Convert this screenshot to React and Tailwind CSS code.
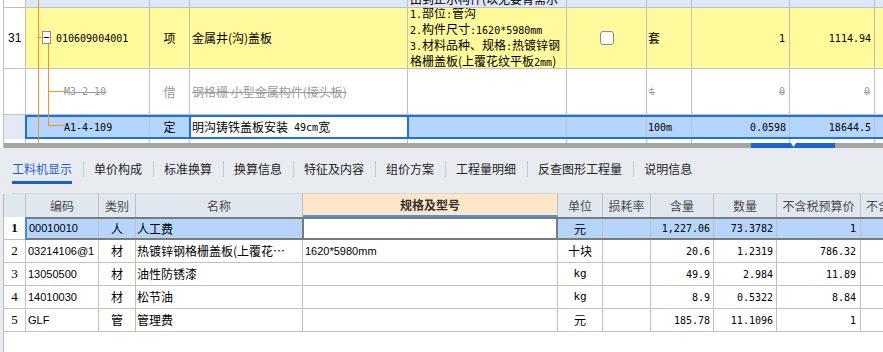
import React from 'react';

const mono = "font-['DejaVu_Sans_Mono',monospace] text-[10px]";
const line = 'border-r border-[#c0c0c0]';

function M({ children, className = '' }) {
  return <span className={`${mono} ${className}`}>{children}</span>;
}

function TreeLines() {
  return (
    <svg className="absolute left-0 top-0 pointer-events-none" width="100" height="143">
      <g stroke="#f6921e" strokeWidth="1" shapeRendering="crispEdges">
        <line x1="34.5" y1="0" x2="34.5" y2="143" />
        <line x1="34" y1="37.5" x2="38" y2="37.5" />
        <line x1="44.5" y1="44" x2="44.5" y2="126" />
        <line x1="44" y1="91.5" x2="62" y2="91.5" />
        <line x1="44" y1="125.5" x2="61" y2="125.5" />
      </g>
      <rect x="38.5" y="31.5" width="8" height="12" fill="#fff" stroke="#8c8c8c" shapeRendering="crispEdges" />
      <line x1="40" y1="37.5" x2="45" y2="37.5" stroke="#000" shapeRendering="crispEdges" />
    </svg>
  );
}

function TopPart() {
  return (
    <div className="flex h-[148px]">
      <div className="w-[4px] shrink-0 border-r border-[#c0c0c0] bg-white" />
      <div className="relative flex-1 flex flex-col">
        {/* previous row, cut off */}
        <div className="flex h-[8px] shrink-0 border-b border-[#c0c0c0] bg-[#dde8fb]">
          <div className={`w-[22px] shrink-0 bg-white ${line}`} />
          <div className={`w-[124px] shrink-0 ${line}`} />
          <div className={`w-[40px] shrink-0 ${line}`} />
          <div className={`w-[218px] shrink-0 ${line}`} />
          <div className={`w-[159px] shrink-0 flex items-end overflow-hidden pl-[2px] ${line}`}>
            <div className="leading-[14px] whitespace-nowrap mb-[1px]">由到正示构件(以无要青需示</div>
          </div>
          <div className={`w-[80px] shrink-0 ${line}`} />
          <div className={`w-[45px] shrink-0 ${line}`} />
          <div className={`w-[98px] shrink-0 ${line}`} />
          <div className={`w-[85px] shrink-0 ${line}`} />
          <div className="flex-1" />
        </div>

        {/* row 31 */}
        <div className="flex h-[61px] shrink-0 border-b border-[#c0c0c0] bg-[#fffa9c]">
          <div className={`w-[22px] shrink-0 bg-white flex items-center pl-[4px] font-['Liberation_Sans',sans-serif] text-[12px] ${line}`}>31</div>
          <div className={`w-[124px] shrink-0 flex items-center pl-[30px] ${line}`}>
            <M>010609004001</M>
          </div>
          <div className={`w-[40px] shrink-0 flex items-center justify-center ${line}`}>项</div>
          <div className={`w-[218px] shrink-0 flex items-center pl-[2px] ${line}`}>金属井(沟)盖板</div>
          <div className={`w-[159px] shrink-0 flex flex-col justify-center pl-[2px] leading-[14px] whitespace-nowrap overflow-hidden ${line}`}>
            <div><M>1.</M>部位<M>:</M>管沟</div>
            <div><M>2.</M>构件尺寸<M>:1620*5980mm</M></div>
            <div><M>3.</M>材料品种、规格<M>:</M>热镀锌钢</div>
            <div>格栅盖板(上覆花纹平板<M>2mm</M>)</div>
          </div>
          <div className={`w-[80px] shrink-0 flex items-center justify-center ${line}`}>
            <div className="w-[14px] h-[14px] rounded-[3px] border border-[#8c8c8c] bg-white" />
          </div>
          <div className={`w-[45px] shrink-0 flex items-center pl-[1px] ${line}`}>套</div>
          <div className={`w-[98px] shrink-0 flex items-center justify-end pr-[4px] ${line}`}><M>1</M></div>
          <div className={`w-[85px] shrink-0 flex items-center justify-end pr-[3px] ${line}`}><M>1114.94</M></div>
          <div className="flex-1" />
        </div>

        {/* borrowed row, struck out */}
        <div className="flex h-[46px] shrink-0 border-b border-[#c0c0c0] bg-white text-[#9a9a9a]">
          <div className={`w-[22px] shrink-0 ${line}`} />
          <div className={`w-[124px] shrink-0 flex items-center pl-[38px] ${line}`}>
            <M className="line-through">M3-2-10</M>
          </div>
          <div className={`w-[40px] shrink-0 flex items-center justify-center ${line}`}>借</div>
          <div className={`w-[218px] shrink-0 flex items-center pl-[2px] whitespace-nowrap overflow-hidden line-through ${line}`}>钢格栅 小型金属构件(接头板)</div>
          <div className={`w-[159px] shrink-0 ${line}`} />
          <div className={`w-[80px] shrink-0 ${line}`} />
          <div className={`w-[45px] shrink-0 flex items-center pl-[2px] ${line}`}><M className="line-through">t</M></div>
          <div className={`w-[98px] shrink-0 flex items-center justify-end pr-[4px] ${line}`}><M className="line-through">0</M></div>
          <div className={`w-[85px] shrink-0 flex items-center justify-end pr-[4px] ${line}`}><M className="line-through">0</M></div>
          <div className="flex-1" />
        </div>

        {/* selected row */}
        <div className="flex h-[24px] shrink-0">
          <div className="w-[21px] shrink-0 bg-[#e4e9f5]" />
          <div className="flex-1 flex border-y-2 border-l-2 border-[#1a6ef0] bg-[#b4d5fd]">
            <div className={`w-[123px] shrink-0 flex items-center pl-[37px] ${line}`}><M>A1-4-109</M></div>
            <div className="w-[39px] shrink-0 flex items-center justify-center">定</div>
            <div className="w-[220px] shrink-0 flex items-center pl-[1px] bg-white border-x-2 border-[#1a6ef0] whitespace-nowrap">
              明沟铸铁盖板安装<M>&nbsp;49cm</M>宽
            </div>
            <div className={`w-[158px] shrink-0 ${line}`} />
            <div className={`w-[80px] shrink-0 ${line}`} />
            <div className={`w-[45px] shrink-0 flex items-center pl-[1px] ${line}`}><M>100m</M></div>
            <div className={`w-[98px] shrink-0 flex items-center justify-end pr-[3px] ${line}`}><M>0.0598</M></div>
            <div className={`w-[85px] shrink-0 flex items-center justify-end pr-[3px] ${line}`}><M>18644.5</M></div>
            <div className="flex-1" />
          </div>
        </div>

        {/* filler */}
        <div className="flex h-[4px] shrink-0 bg-white">
          <div className={`w-[22px] shrink-0 ${line}`} />
          <div className={`w-[124px] shrink-0 ${line}`} />
          <div className={`w-[40px] shrink-0 ${line}`} />
          <div className={`w-[218px] shrink-0 ${line}`} />
          <div className={`w-[159px] shrink-0 ${line}`} />
          <div className={`w-[80px] shrink-0 ${line}`} />
          <div className={`w-[45px] shrink-0 ${line}`} />
          <div className={`w-[98px] shrink-0 ${line}`} />
          <div className={`w-[85px] shrink-0 ${line}`} />
        </div>

        {/* horizontal scrollbar */}
        <div className="flex h-[5px] shrink-0 bg-[#a5a5a8]">
          <div className="w-[747px] shrink-0" />
          <div className="w-[84px] shrink-0 bg-[#1c64d2] flex justify-center">
            <svg width="5" height="4" viewBox="0 0 5 4"><path d="M0 0h5L2.5 4z" fill="#fff" /></svg>
          </div>
        </div>

        <TreeLines />
      </div>
    </div>
  );
}

const tabs = ['工料机显示', '单价构成', '标准换算', '换算信息', '特征及内容', '组价方案', '工程量明细', '反查图形工程量', '说明信息'];

function Tabs() {
  return (
    <div className="h-[46px] shrink-0 ml-[12px] border-b border-[#d2d7dd] flex items-start pt-[13px] text-[#222]">
      {tabs.map((t, i) => (
        <React.Fragment key={t}>
          {i > 0 && <div className="w-px h-[16px] bg-[#c6cbd2] ml-[11px] mr-[10px]" />}
          <div
            className={
              i === 0
                ? 'leading-[16px] text-[#1d5fd0] border-b-[3px] border-[#1d5fd0] pb-[4px] whitespace-nowrap'
                : 'leading-[16px] whitespace-nowrap'
            }
          >
            {t}
          </div>
        </React.Fragment>
      ))}
    </div>
  );
}

const rows = [
  { n: '2', code: '03214106@1', type: '材', name: '热镀锌钢格栅盖板(上覆花…', spec: '1620*5980mm', unit: '十块', content: '20.6', amount: '1.2319', price: '786.32' },
  { n: '3', code: '13050500', type: '材', name: '油性防锈漆', spec: '', unit: 'kg', content: '49.9', amount: '2.984', price: '11.89' },
  { n: '4', code: '14010030', type: '材', name: '松节油', spec: '', unit: 'kg', content: '8.9', amount: '0.5322', price: '8.84' },
  { n: '5', code: 'GLF', type: '管', name: '管理费', spec: '', unit: '元', content: '185.78', amount: '11.1096', price: '1' },
];

function Unit({ u }) {
  if (/^[a-z]+$/.test(u)) return <M className="text-[11px]">{u}</M>;
  return <span>{u}</span>;
}

function BottomTable() {
  return (
    <div className="flex-1 ml-[3px] border-l border-[#b9b9b9] bg-white flex flex-col">
      {/* header */}
      <div className="flex h-[23px] shrink-0 bg-[#e1e7ef] text-[#4a4a4a]">
        <div className={`w-[22px] shrink-0 ${line}`} />
        <div className={`w-[73px] shrink-0 flex items-center justify-center ${line}`}>编码</div>
        <div className={`w-[37px] shrink-0 flex items-center justify-center ${line}`}>类别</div>
        <div className={`w-[167px] shrink-0 flex items-center justify-center ${line}`}>名称</div>
        <div className={`w-[255px] shrink-0 flex items-center justify-center bg-[#ffe6c9] border-b-2 border-b-[#4a95e6] font-bold text-[#333] ${line}`}>规格及型号</div>
        <div className={`w-[45px] shrink-0 flex items-center justify-center ${line}`}>单位</div>
        <div className={`w-[48px] shrink-0 flex items-center justify-center ${line}`}>损耗率</div>
        <div className={`w-[63px] shrink-0 flex items-center justify-center ${line}`}>含量</div>
        <div className={`w-[63px] shrink-0 flex items-center justify-center ${line}`}>数量</div>
        <div className={`w-[84px] shrink-0 flex items-center justify-center ${line}`}>不含税预算价</div>
        <div className="flex-1 flex items-center pl-[5px] overflow-hidden whitespace-nowrap">不含税市场价</div>
      </div>

      {/* selected row 1 */}
      <div className="flex h-[23px] shrink-0">
        <div className="w-[21px] shrink-0 flex items-center justify-center border-b border-[#c0c0c0] font-['Liberation_Serif',serif] text-[13px] font-bold">1</div>
        <div className="flex-1 flex border-y-2 border-[#7b7b7b] bg-[#b5d5fb]">
          <div className={`w-[74px] shrink-0 flex items-center pl-[2px] border-l-2 border-l-[#3a8cf0] font-['Liberation_Sans',sans-serif] text-[11px] ${line}`}>00010010</div>
          <div className={`w-[37px] shrink-0 flex items-center justify-center ${line}`}>人</div>
          <div className="w-[166px] shrink-0 flex items-center pl-[1px]">人工费</div>
          <div className="w-[256px] shrink-0 bg-white border-x-2 border-[#7b7b7b]" />
          <div className={`w-[45px] shrink-0 flex items-center justify-center ${line}`}>元</div>
          <div className={`w-[48px] shrink-0 ${line}`} />
          <div className={`w-[63px] shrink-0 flex items-center justify-end pr-[3px] ${line}`}><M>1,227.06</M></div>
          <div className={`w-[63px] shrink-0 flex items-center justify-end pr-[3px] ${line}`}><M>73.3782</M></div>
          <div className={`w-[84px] shrink-0 flex items-center justify-end pr-[4px] ${line}`}><M>1</M></div>
          <div className="flex-1" />
        </div>
      </div>

      {rows.map((r) => (
        <div key={r.n} className="flex h-[23px] shrink-0 border-b border-[#c0c0c0]">
          <div className={`w-[22px] shrink-0 flex items-center justify-center font-['Liberation_Serif',serif] text-[13px] ${line}`}>{r.n}</div>
          <div className={`w-[73px] shrink-0 flex items-center pl-[2px] whitespace-nowrap overflow-hidden font-['Liberation_Sans',sans-serif] text-[11px] ${line}`}>{r.code}</div>
          <div className={`w-[37px] shrink-0 flex items-center justify-center ${line}`}>{r.type}</div>
          <div className={`w-[167px] shrink-0 flex items-center pl-[1px] whitespace-nowrap overflow-hidden ${line}`}>{r.name}</div>
          <div className={`w-[255px] shrink-0 flex items-center pl-[2px] font-['Liberation_Sans',sans-serif] text-[11px] ${line}`}>{r.spec}</div>
          <div className={`w-[45px] shrink-0 flex items-center justify-center ${line}`}><Unit u={r.unit} /></div>
          <div className={`w-[48px] shrink-0 ${line}`} />
          <div className={`w-[63px] shrink-0 flex items-center justify-end pr-[3px] ${line}`}><M>{r.content}</M></div>
          <div className={`w-[63px] shrink-0 flex items-center justify-end pr-[3px] ${line}`}><M>{r.amount}</M></div>
          <div className={`w-[84px] shrink-0 flex items-center justify-end pr-[4px] ${line}`}><M>{r.price}</M></div>
          <div className="flex-1" />
        </div>
      ))}
    </div>
  );
}

export default function App() {
  return (
    <div className="w-[883px] h-[352px] overflow-hidden bg-white flex flex-col font-['Noto_Sans_CJK_SC',sans-serif] text-[12px] text-black">
      <TopPart />
      <div className="flex-1 flex flex-col bg-[#e8ecf1]">
        <Tabs />
        <BottomTable />
      </div>
    </div>
  );
}
